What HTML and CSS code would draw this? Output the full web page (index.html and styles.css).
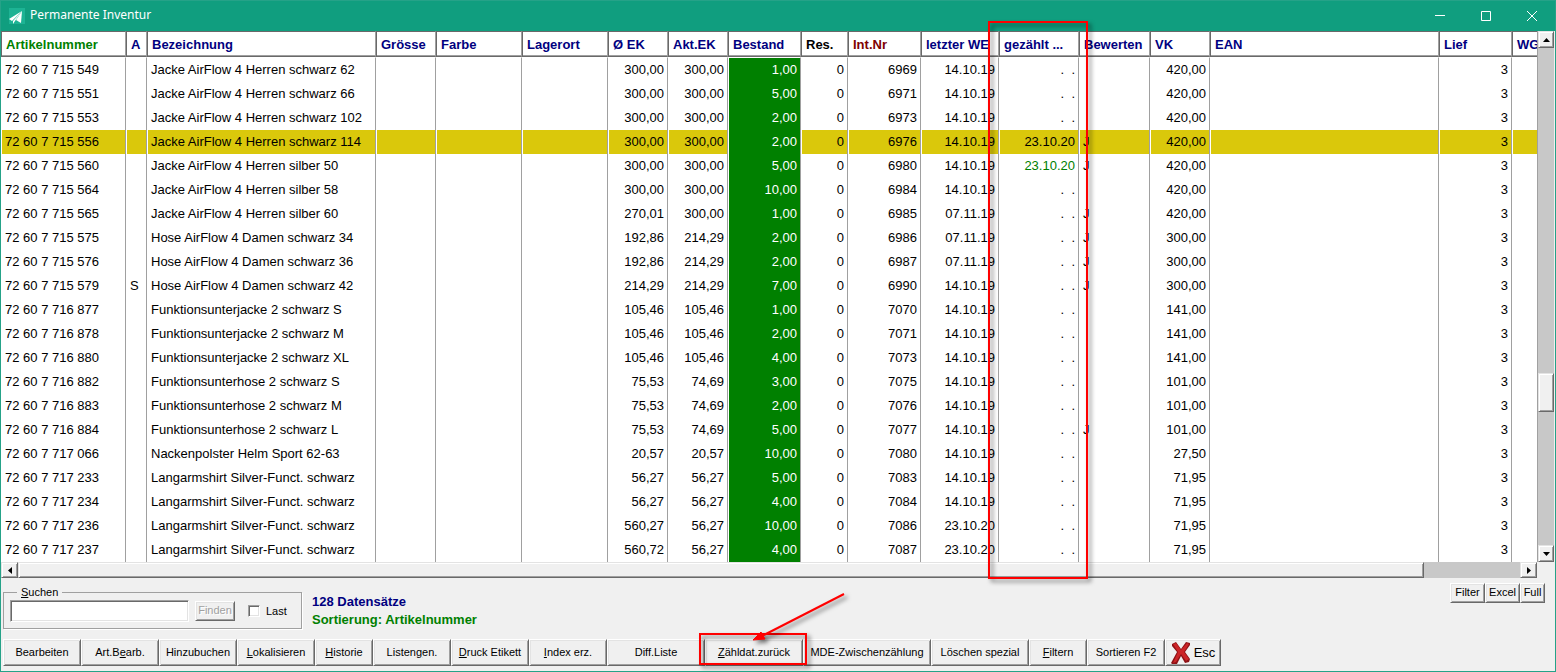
FILE: index.html
```html
<!DOCTYPE html>
<html lang="de">
<head>
    <meta charset="UTF-8">
    <title>Permanente Inventur</title>
    <link rel="stylesheet" href="styles.css">
</head>
<body>

<div class="window">
    <!-- Title bar -->
    <div class="titlebar">
        <svg class="app-icon" viewBox="0 0 16 16"><rect width="16" height="16" fill="#1db394"/><path d="M13 3 0 11l3 2z" fill="#fff"/><path d="M13 3 4 13v3l2-3z" fill="#fff"/><path d="M13 3 7 12l5 3z" fill="#fff"/></svg>
        <span class="title">Permanente Inventur</span>
        <button class="win-button" aria-label="Minimieren"><svg viewBox="0 0 12 12"><path d="M1 5.500h10"/></svg></button>
        <button class="win-button" aria-label="Maximieren"><svg viewBox="0 0 12 12"><path d="M1.500 1.500h9v9h-9z"/></svg></button>
        <button class="win-button" aria-label="Schliessen"><svg viewBox="0 0 12 12"><path d="M1 1l10 10M11 1L1 11"/></svg></button>
    </div>

    <!-- Article list -->
    <div class="grid">
        <div class="table-view">
            <table>
                <colgroup>
                    <col class="w-number"><col class="w-flag"><col class="w-name"><col class="w-price"><col class="w-wide"><col class="w-wide">
                    <col class="w-price"><col class="w-price"><col class="w-stock"><col class="w-res"><col class="w-stock"><col class="w-date">
                    <col class="w-counted"><col class="w-rate"><col class="w-price"><col class="w-name"><col class="w-stock"><col>
                </colgroup>
                <thead>
                    <tr><th class="sorted">Artikelnummer</th><th>A</th><th>Bezeichnung</th><th>Grösse</th><th>Farbe</th><th>Lagerort</th><th>Ø EK</th><th>Akt.EK</th><th>Bestand</th><th class="dark">Res.</th><th class="red">Int.Nr</th><th>letzter WE</th><th>gezählt ...</th><th>Bewerten</th><th>VK</th><th>EAN</th><th>Lief</th><th>WG</th></tr>
                </thead>
                <tbody>
                    <tr><td>72 60 7 715 549</td><td></td><td>Jacke AirFlow 4 Herren schwarz 62</td><td></td><td></td><td></td><td class="num">300,00</td><td class="num">300,00</td><td class="num stock">1,00</td><td class="num">0</td><td class="num">6969</td><td class="num">14.10.19</td><td class="num">.&nbsp;&nbsp;.</td><td></td><td class="num">420,00</td><td></td><td class="num">3</td><td></td></tr>
                    <tr><td>72 60 7 715 551</td><td></td><td>Jacke AirFlow 4 Herren schwarz 66</td><td></td><td></td><td></td><td class="num">300,00</td><td class="num">300,00</td><td class="num stock">5,00</td><td class="num">0</td><td class="num">6971</td><td class="num">14.10.19</td><td class="num">.&nbsp;&nbsp;.</td><td></td><td class="num">420,00</td><td></td><td class="num">3</td><td></td></tr>
                    <tr><td>72 60 7 715 553</td><td></td><td>Jacke AirFlow 4 Herren schwarz 102</td><td></td><td></td><td></td><td class="num">300,00</td><td class="num">300,00</td><td class="num stock">2,00</td><td class="num">0</td><td class="num">6973</td><td class="num">14.10.19</td><td class="num">.&nbsp;&nbsp;.</td><td></td><td class="num">420,00</td><td></td><td class="num">3</td><td></td></tr>
                    <tr class="selected"><td>72 60 7 715 556</td><td></td><td>Jacke AirFlow 4 Herren schwarz 114</td><td></td><td></td><td></td><td class="num">300,00</td><td class="num">300,00</td><td class="num stock">2,00</td><td class="num">0</td><td class="num">6976</td><td class="num">14.10.19</td><td class="num">23.10.20</td><td>J</td><td class="num">420,00</td><td></td><td class="num">3</td><td></td></tr>
                    <tr><td>72 60 7 715 560</td><td></td><td>Jacke AirFlow 4 Herren silber 50</td><td></td><td></td><td></td><td class="num">300,00</td><td class="num">300,00</td><td class="num stock">5,00</td><td class="num">0</td><td class="num">6980</td><td class="num">14.10.19</td><td class="num counted">23.10.20</td><td>J</td><td class="num">420,00</td><td></td><td class="num">3</td><td></td></tr>
                    <tr><td>72 60 7 715 564</td><td></td><td>Jacke AirFlow 4 Herren silber 58</td><td></td><td></td><td></td><td class="num">300,00</td><td class="num">300,00</td><td class="num stock">10,00</td><td class="num">0</td><td class="num">6984</td><td class="num">14.10.19</td><td class="num">.&nbsp;&nbsp;.</td><td></td><td class="num">420,00</td><td></td><td class="num">3</td><td></td></tr>
                    <tr><td>72 60 7 715 565</td><td></td><td>Jacke AirFlow 4 Herren silber 60</td><td></td><td></td><td></td><td class="num">270,01</td><td class="num">300,00</td><td class="num stock">1,00</td><td class="num">0</td><td class="num">6985</td><td class="num">07.11.19</td><td class="num">.&nbsp;&nbsp;.</td><td>J</td><td class="num">420,00</td><td></td><td class="num">3</td><td></td></tr>
                    <tr><td>72 60 7 715 575</td><td></td><td>Hose AirFlow 4 Damen schwarz 34</td><td></td><td></td><td></td><td class="num">192,86</td><td class="num">214,29</td><td class="num stock">2,00</td><td class="num">0</td><td class="num">6986</td><td class="num">07.11.19</td><td class="num">.&nbsp;&nbsp;.</td><td>J</td><td class="num">300,00</td><td></td><td class="num">3</td><td></td></tr>
                    <tr><td>72 60 7 715 576</td><td></td><td>Hose AirFlow 4 Damen schwarz 36</td><td></td><td></td><td></td><td class="num">192,86</td><td class="num">214,29</td><td class="num stock">2,00</td><td class="num">0</td><td class="num">6987</td><td class="num">07.11.19</td><td class="num">.&nbsp;&nbsp;.</td><td>J</td><td class="num">300,00</td><td></td><td class="num">3</td><td></td></tr>
                    <tr><td>72 60 7 715 579</td><td>S</td><td>Hose AirFlow 4 Damen schwarz 42</td><td></td><td></td><td></td><td class="num">214,29</td><td class="num">214,29</td><td class="num stock">7,00</td><td class="num">0</td><td class="num">6990</td><td class="num">14.10.19</td><td class="num">.&nbsp;&nbsp;.</td><td>J</td><td class="num">300,00</td><td></td><td class="num">3</td><td></td></tr>
                    <tr><td>72 60 7 716 877</td><td></td><td>Funktionsunterjacke 2 schwarz S</td><td></td><td></td><td></td><td class="num">105,46</td><td class="num">105,46</td><td class="num stock">1,00</td><td class="num">0</td><td class="num">7070</td><td class="num">14.10.19</td><td class="num">.&nbsp;&nbsp;.</td><td></td><td class="num">141,00</td><td></td><td class="num">3</td><td></td></tr>
                    <tr><td>72 60 7 716 878</td><td></td><td>Funktionsunterjacke 2 schwarz M</td><td></td><td></td><td></td><td class="num">105,46</td><td class="num">105,46</td><td class="num stock">2,00</td><td class="num">0</td><td class="num">7071</td><td class="num">14.10.19</td><td class="num">.&nbsp;&nbsp;.</td><td></td><td class="num">141,00</td><td></td><td class="num">3</td><td></td></tr>
                    <tr><td>72 60 7 716 880</td><td></td><td>Funktionsunterjacke 2 schwarz XL</td><td></td><td></td><td></td><td class="num">105,46</td><td class="num">105,46</td><td class="num stock">4,00</td><td class="num">0</td><td class="num">7073</td><td class="num">14.10.19</td><td class="num">.&nbsp;&nbsp;.</td><td></td><td class="num">141,00</td><td></td><td class="num">3</td><td></td></tr>
                    <tr><td>72 60 7 716 882</td><td></td><td>Funktionsunterhose 2 schwarz S</td><td></td><td></td><td></td><td class="num">75,53</td><td class="num">74,69</td><td class="num stock">3,00</td><td class="num">0</td><td class="num">7075</td><td class="num">14.10.19</td><td class="num">.&nbsp;&nbsp;.</td><td></td><td class="num">101,00</td><td></td><td class="num">3</td><td></td></tr>
                    <tr><td>72 60 7 716 883</td><td></td><td>Funktionsunterhose 2 schwarz M</td><td></td><td></td><td></td><td class="num">75,53</td><td class="num">74,69</td><td class="num stock">2,00</td><td class="num">0</td><td class="num">7076</td><td class="num">14.10.19</td><td class="num">.&nbsp;&nbsp;.</td><td></td><td class="num">101,00</td><td></td><td class="num">3</td><td></td></tr>
                    <tr><td>72 60 7 716 884</td><td></td><td>Funktionsunterhose 2 schwarz L</td><td></td><td></td><td></td><td class="num">75,53</td><td class="num">74,69</td><td class="num stock">5,00</td><td class="num">0</td><td class="num">7077</td><td class="num">14.10.19</td><td class="num">.&nbsp;&nbsp;.</td><td>J</td><td class="num">101,00</td><td></td><td class="num">3</td><td></td></tr>
                    <tr><td>72 60 7 717 066</td><td></td><td>Nackenpolster Helm Sport 62-63</td><td></td><td></td><td></td><td class="num">20,57</td><td class="num">20,57</td><td class="num stock">10,00</td><td class="num">0</td><td class="num">7080</td><td class="num">14.10.19</td><td class="num">.&nbsp;&nbsp;.</td><td></td><td class="num">27,50</td><td></td><td class="num">3</td><td></td></tr>
                    <tr><td>72 60 7 717 233</td><td></td><td>Langarmshirt Silver-Funct. schwarz</td><td></td><td></td><td></td><td class="num">56,27</td><td class="num">56,27</td><td class="num stock">5,00</td><td class="num">0</td><td class="num">7083</td><td class="num">14.10.19</td><td class="num">.&nbsp;&nbsp;.</td><td></td><td class="num">71,95</td><td></td><td class="num">3</td><td></td></tr>
                    <tr><td>72 60 7 717 234</td><td></td><td>Langarmshirt Silver-Funct. schwarz</td><td></td><td></td><td></td><td class="num">56,27</td><td class="num">56,27</td><td class="num stock">4,00</td><td class="num">0</td><td class="num">7084</td><td class="num">14.10.19</td><td class="num">.&nbsp;&nbsp;.</td><td></td><td class="num">71,95</td><td></td><td class="num">3</td><td></td></tr>
                    <tr><td>72 60 7 717 236</td><td></td><td>Langarmshirt Silver-Funct. schwarz</td><td></td><td></td><td></td><td class="num">560,27</td><td class="num">56,27</td><td class="num stock">10,00</td><td class="num">0</td><td class="num">7086</td><td class="num">23.10.20</td><td class="num">.&nbsp;&nbsp;.</td><td></td><td class="num">71,95</td><td></td><td class="num">3</td><td></td></tr>
                    <tr><td>72 60 7 717 237</td><td></td><td>Langarmshirt Silver-Funct. schwarz</td><td></td><td></td><td></td><td class="num">560,72</td><td class="num">56,27</td><td class="num stock">4,00</td><td class="num">0</td><td class="num">7087</td><td class="num">23.10.20</td><td class="num">.&nbsp;&nbsp;.</td><td></td><td class="num">71,95</td><td></td><td class="num">3</td><td></td></tr>
                </tbody>
            </table>
        </div>
        <div class="vscroll">
            <button class="scroll-button" aria-label="Nach oben"><svg viewBox="0 0 7 4"><path d="M0 4h7L3.500 0z"/></svg></button>
            <div class="track-before"></div>
            <div class="thumb"></div>
            <div class="track-after"></div>
            <button class="scroll-button" aria-label="Nach unten"><svg viewBox="0 0 7 4"><path d="M0 0h7L3.500 4z"/></svg></button>
        </div>
    </div>
    <div class="hscroll">
        <button class="scroll-button" aria-label="Nach links"><svg class="side" viewBox="0 0 4 7"><path d="M4 0v7L0 3.500z"/></svg></button>
        <div class="thumb"></div>
        <div class="track-after"></div>
        <button class="scroll-button" aria-label="Nach rechts"><svg class="side" viewBox="0 0 4 7"><path d="M0 0v7l4-3.500z"/></svg></button>
    </div>

    <!-- Search and status -->
    <div class="info">
        <fieldset>
            <legend><label for="search"><u>S</u>uchen</label></legend>
            <input type="text" id="search">
            <button class="small" disabled>Finden</button>
            <input type="checkbox" id="last"><label for="last">Last</label>
        </fieldset>
        <div class="status">
            <div>128 Datensätze</div>
            <div class="sorting">Sortierung: Artikelnummer</div>
        </div>
        <div class="tools">
            <button class="small">Filter</button>
            <button class="small">Excel</button>
            <button class="small full">Full</button>
        </div>
    </div>

    <!-- Button bar -->
    <div class="actions">
        <button>Bearbeiten</button>
        <button>Art.B<u>e</u>arb.</button>
        <button>Hinzubuchen</button>
        <button><u>L</u>okalisieren</button>
        <button class="narrow"><u>H</u>istorie</button>
        <button>Listen<u>g</u>en.</button>
        <button><u>D</u>ruck Etikett</button>
        <button><u>I</u>ndex erz.</button>
        <button class="wide">Diff.Liste</button>
        <button class="wide"><u>Z</u>ähldat.zurück</button>
        <button class="widest">MDE-Zwischenzählung</button>
        <button class="wide">Löschen spezial</button>
        <button class="narrow"><u>F</u>iltern</button>
        <button>Sortieren F2</button>
        <button class="esc"><svg viewBox="0 0 20 23"><path d="M1 3l4-2 5 7 5-7 4 1v2l-5 7 5 7-1 3-4 1-4-7-4 8-4 1-2-2 6-11-5-6z" fill="#8d1216"/><path d="M2 3l3-1 5 7 6-7 2 1-5 8 5 7-3 2-5-7-5 8-3 1 5-11z" fill="#cc2427"/></svg>Esc</button>
    </div>

    <!-- Red markers -->
    <div class="mark mark-column"></div>
    <div class="mark mark-button"></div>
    <svg class="mark-arrow" viewBox="0 0 100 56"><path d="M92 5L10 47" stroke="#f00" stroke-width="2"/><path d="M1 51l8-8 4 7z" fill="#f00" stroke="#f00"/></svg>
</div>

</body>
</html>
```
FILE: styles.css
```css
* {
    box-sizing: border-box;
}
body {
    margin: 0;
    font-family: "Liberation Sans", Arial, sans-serif;
    font-size: 11px;
    color: #000;
}
button, input {
    font-family: inherit;
    font-size: inherit;
    color: inherit;
}
.window {
    position: relative;
    display: flex;
    flex-direction: column;
    min-height: 100vh;
    border: 1px solid #25a288;
    background-color: #f0f0f0;
    overflow: hidden;
}

/* Title bar */
.titlebar {
    display: flex;
    align-items: center;
    height: 30px;
    padding-left: 8px;
    background-color: #109e7f;
    color: #fff;
}
.app-icon {
    width: 16px;
    height: 16px;
}
.title {
    flex: 1;
    padding-left: 5px;
    font-family: "Noto Sans", "Segoe UI", sans-serif;
    font-size: 12px;
    line-height: 16px;
    padding-bottom: 2px;
}
.win-button {
    width: 46px;
    height: 30px;
    padding: 0;
    border: none;
    background: none;
}
.win-button svg {
    display: block;
    width: 12px;
    height: 12px;
    margin: 0 auto;
    fill: none;
    stroke: #fff;
}

/* Table */
.grid {
    display: flex;
    padding-right: 1px;
}
.table-view {
    flex: 1;
    min-width: 0;
    overflow: hidden;
    background-color: #fff;
}
table {
    width: 100%;
    table-layout: fixed;
    border-spacing: 0;
    font-size: 13px;
}
.w-number { width: 125px; }
.w-flag { width: 21px; }
.w-name { width: 229px; }
.w-price { width: 60px; }
.w-wide { width: 86px; }
.w-stock { width: 73px; }
.w-res { width: 47px; }
.w-date { width: 78px; }
.w-counted { width: 80px; }
.w-rate { width: 71px; }
th, td {
    height: 24px;
    overflow: hidden;
    white-space: nowrap;
    text-align: left;
}
th {
    height: 26px;
    padding: 0 0 0 4px;
    border: 1px solid #696969;
    border-right-color: #a0a0a0;
    box-shadow: inset 0 -1px #a0a0a0;
    color: #000080;
}
th.sorted {
    color: #008000;
}
th.dark {
    color: #000;
}
th.red {
    color: #800000;
}
td {
    padding: 0 3px 2px;
    border-left: 1px solid #fff;
    border-right: 1px solid #a0a0a0;
}
th:last-child, td:last-child {
    border-right: none;
}
tbody tr:first-child td {
    height: 25px;
    border-top: 1px solid #fff;
}
.num {
    text-align: right;
}
.selected td {
    background-color: #dac80b;
}
td.stock, .selected td.stock {
    background-color: #008000;
    color: #fff;
}
.counted {
    color: #008000;
}

/* Scroll bars */
.vscroll {
    display: flex;
    flex-direction: column;
    width: 17px;
    background-color: #c8c8c8;
    border-left: 1px solid #a0a0a0;
}
.hscroll {
    display: flex;
    height: 16px;
    padding-right: 18px;
}
.scroll-button, .thumb {
    border: 1px solid #e3e3e3;
    border-right-color: #696969;
    border-bottom-color: #696969;
    background-color: #f0f0f0;
    box-shadow: inset 1px 1px #fff, inset -1px -1px #a0a0a0;
}
.scroll-button {
    display: flex;
    align-items: center;
    justify-content: center;
    flex: none;
    width: 16px;
    height: 17px;
    padding: 0;
}
.hscroll .scroll-button {
    width: 17px;
    height: 16px;
}
.scroll-button svg {
    width: 7px;
    height: 4px;
}
.scroll-button svg.side {
    width: 4px;
    height: 7px;
}
.vscroll .track-before {
    flex: 324;
}
.vscroll .thumb {
    height: 39px;
}
.vscroll .track-after {
    flex: 133;
}
.hscroll .thumb {
    flex: 1407;
}
.hscroll .track-after {
    flex: 96;
    background-color: #c8c8c8;
}

/* Search and status */
.info {
    display: flex;
    align-items: flex-start;
    padding: 5px 10px 0 2px;
    height: 61px;
}
fieldset {
    display: flex;
    align-items: center;
    width: 299px;
    margin: 2px 0 0;
    padding: 1px 6px 6px;
    border: 1px solid #a0a0a0;
    box-shadow: 1px 1px #fff;
}
legend {
    margin-left: 7px;
    padding: 0 4px;
    line-height: 14px;
}
input[type="text"] {
    width: 179px;
    height: 22px;
    border: 1px solid #a0a0a0;
    border-right-color: #fff;
    border-bottom-color: #fff;
    background-color: #fff;
    box-shadow: inset 1px 1px #696969, inset -1px -1px #e3e3e3;
}
input[type="checkbox"] {
    appearance: none;
    width: 12px;
    height: 12px;
    margin: 0 6px 0 13px;
    border: 1px solid #a0a0a0;
    border-right-color: #fff;
    border-bottom-color: #fff;
    background-color: #fff;
    box-shadow: inset 1px 1px #696969, inset -1px -1px #e3e3e3;
}
.small, .actions button {
    padding: 0 0 2px;
    border: 1px solid #fff;
    border-right-color: #696969;
    border-bottom-color: #696969;
    background-color: #f0f0f0;
    box-shadow: inset 1px 1px #e3e3e3, inset -1px -1px #a0a0a0;
    white-space: nowrap;
}
.small {
    width: 35px;
    height: 20px;
}
fieldset .small {
    width: 40px;
    margin-left: 6px;
    color: #a0a0a0;
    text-shadow: 1px 1px #fff;
}
.small.full {
    width: 25px;
}
.status {
    flex: 1;
    padding: 10px 0 0 10px;
    font-size: 13px;
    font-weight: bold;
    line-height: 18px;
    color: #000080;
}
.sorting {
    color: #008000;
}
.tools {
    display: flex;
}

/* Button bar */
.actions {
    display: flex;
    padding: 0 0 5px 2px;
}
.actions button {
    width: 78px;
    height: 27px;
}
.actions .narrow {
    width: 58px;
}
.actions .wide {
    width: 98px;
}
.actions .widest {
    width: 128px;
}
.actions .esc {
    display: flex;
    align-items: center;
    justify-content: center;
    gap: 3px;
    width: 56px;
    padding: 0;
    font-size: 13px;
}
.esc svg {
    width: 20px;
    height: 23px;
}

/* Red markers */
.mark, .mark-arrow {
    position: absolute;
    pointer-events: none;
    filter: drop-shadow(3px 3px 2px rgba(0, 0, 0, 0.5));
}
.mark {
    border: 2px solid #f00;
}
.mark-column {
    left: 987px;
    top: 20px;
    width: 100px;
    height: 558px;
}
.mark-button {
    left: 698px;
    top: 632px;
    width: 108px;
    height: 32px;
}
.mark-arrow {
    left: 751px;
    top: 588px;
    width: 100px;
    height: 56px;
}
```
